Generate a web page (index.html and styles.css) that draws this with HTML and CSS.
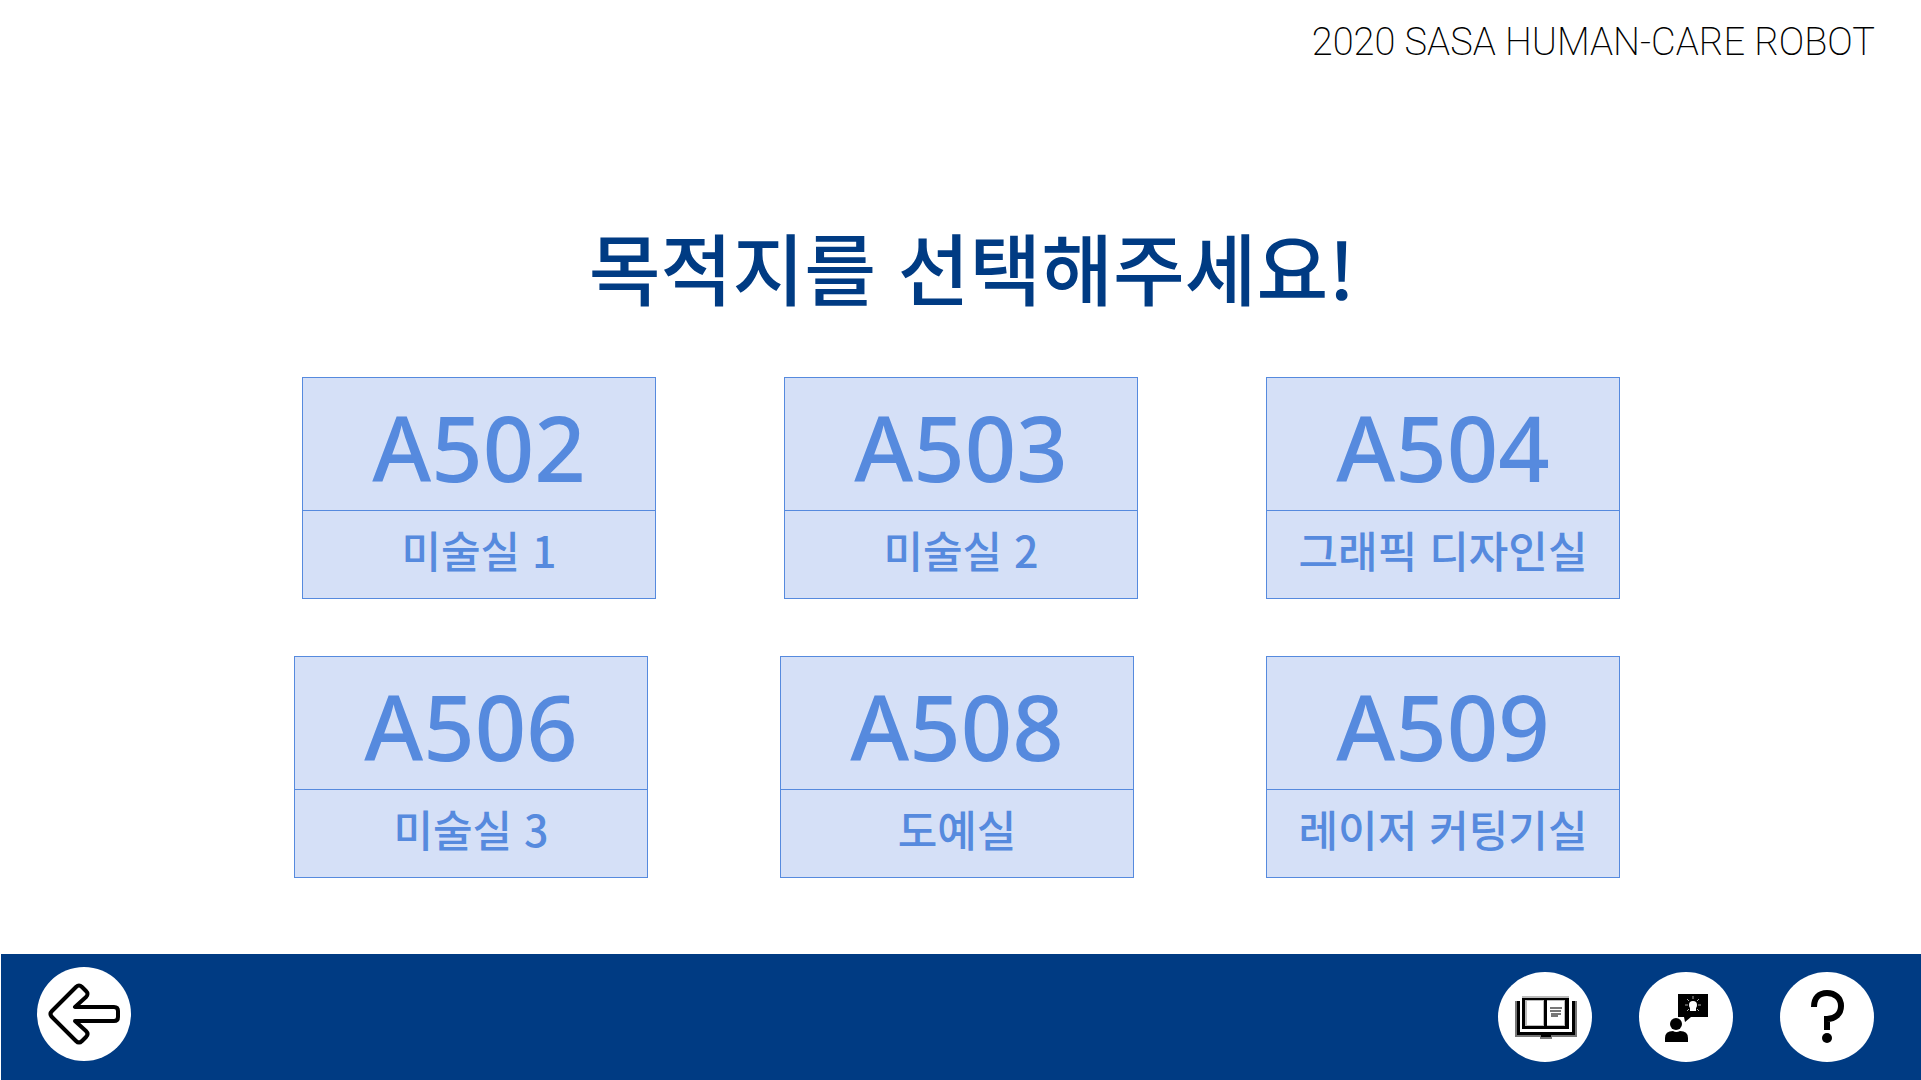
FILE: index.html
```html
<!DOCTYPE html>
<html lang="ko">
<head>
<meta charset="utf-8">
<meta name="viewport" content="width=device-width, initial-scale=1">
<title>목적지 선택</title>
<link rel="stylesheet" href="styles.css">
</head>
<body>
<header class="brand">2020 SASA HUMAN-CARE ROBOT</header>
<main class="content">
  <h1 class="title">목적지를 선택해주세요!</h1>
  <div class="rooms rooms-first">
    <button class="room" type="button"><span class="number">A502</span><span class="name">미술실 1</span></button>
    <button class="room" type="button"><span class="number">A503</span><span class="name">미술실 2</span></button>
    <button class="room" type="button"><span class="number">A504</span><span class="name">그래픽 디자인실</span></button>
  </div>
  <div class="rooms">
    <button class="room" type="button"><span class="number">A506</span><span class="name">미술실 3</span></button>
    <button class="room" type="button"><span class="number">A508</span><span class="name">도예실</span></button>
    <button class="room" type="button"><span class="number">A509</span><span class="name">레이저 커팅기실</span></button>
  </div>
</main>
<footer class="toolbar">
  <button class="tool back" type="button" aria-label="뒤로">
    <svg width="94" height="94" viewBox="0 0 94 94" fill="none" stroke="#000" stroke-width="4" stroke-linejoin="round">
      <path d="M15 44 L39 20 Q42 17 45 20 L49 24 Q52 27 49 30 L38 40 H77 Q81 40 81 44 V50 Q81 54 77 54 H38 L49 64 Q52 67 49 70 L45 74 Q42 77 39 74 L15 50 Q12 47 15 44 Z"/>
    </svg>
  </button>
  <nav class="tools">
    <button class="tool" type="button" aria-label="책">
      <svg width="94" height="90" viewBox="0 0 94 90">
        <path fill="#777" d="M17 29h5v31h52V29h5v36H54v2H42v-2H17z"/>
        <path fill="#000" d="M19 29h3v31h52V29h3v34H53v2H43v-2H19z"/>
        <path fill="#fff" d="M22 29h52v31H22z"/>
        <path fill="#bbb" d="M24 24h47v3H24z"/>
        <path fill="#000" d="M24 26h47v31H24z"/>
        <path fill="#bbb" d="M27 28h19v26H27zM49 28h18v26H49z"/>
        <path fill="#fff" d="M29 29h16v24H29zM49 29h17v24H49z"/>
        <path stroke="#777" stroke-width="2" d="M52 36h12M52 39h11M53 42h10M53 44h7"/>
      </svg>
    </button>
    <button class="tool" type="button" aria-label="안내">
      <svg width="94" height="90" viewBox="0 0 94 90">
        <path d="M39 22h30v23H52l-6 5-1-5h-6z"/>
        <circle cx="54" cy="33" r="4" fill="#fff"/>
        <path fill="#fff" d="M51 35h6v4h-6z"/>
        <path stroke="#aaa" d="M54 24v3M46 33h3M59 33h3M48 27l2 2M60 27l-2 2M48 39l2-2M60 39l-2-2"/>
        <circle cx="37" cy="52" r="6"/>
        <path d="M26 70v-4q0-7 8-7 3 2 7 0 8 0 8 7v4z"/>
      </svg>
    </button>
    <button class="tool" type="button" aria-label="도움말">
      <svg width="94" height="90" viewBox="0 0 94 90">
        <path fill="none" stroke="#000" stroke-width="6" d="M34 35c0-9 5-14 13-14s14 5 14 13-6 13-14 13v11"/>
        <circle cx="47" cy="66" r="5"/>
      </svg>
    </button>
  </nav>
</footer>
</body>
</html>
```
FILE: styles.css
```css
* {
  box-sizing: border-box;
}

body {
  margin: 0;
  min-height: 100vh;
  display: flex;
  flex-direction: column;
  background: #fff;
  font-family: "Noto Sans", "Noto Sans CJK KR", sans-serif;
}

button {
  margin: 0;
  padding: 0;
  border: 0;
  font: inherit;
  cursor: pointer;
}

.brand {
  padding: 16px 46px 0;
  font-family: Roboto, sans-serif;
  font-size: 38px;
  font-weight: 200;
  line-height: 52px;
  text-align: right;
  color: #000;
}

.content {
  flex: 1;
  display: flex;
  flex-direction: column;
  gap: 53px;
  padding: 140px 301px 0 294px;
}

.title {
  margin: 0;
  padding-left: 30px;
  font-family: "Noto Sans CJK KR", sans-serif;
  font-size: 78px;
  font-weight: 500;
  line-height: 116px;
  text-align: center;
  color: #003b83;
}

.rooms {
  display: flex;
  justify-content: space-between;
}

.rooms-first {
  padding-left: 8px;
  margin-bottom: 4px;
}

.room {
  flex: 0 1 354px;
  display: flex;
  flex-direction: column;
  border: 1px solid #568ade;
  background: #d5e0f7;
  color: #568ade;
  font-weight: 500;
  text-align: center;
}

.number {
  width: 100%;
  padding: 8px 0 2px;
  border-bottom: 1px solid #568ade;
  font-size: 90px;
  line-height: 122px;
}

.name {
  width: 100%;
  font-family: "Noto Sans CJK KR", sans-serif;
  font-size: 43px;
  line-height: 76px;
  padding-bottom: 11px;
}

.toolbar {
  display: flex;
  align-items: center;
  justify-content: space-between;
  height: 126px;
  margin-left: 1px;
  padding: 0 47px 0 36px;
  background: #003b83;
}

.tools {
  display: flex;
  gap: 47px;
}

.tool {
  width: 94px;
  height: 90px;
  border-radius: 50%;
  background: #fff;
}

.back {
  height: 94px;
  margin-bottom: 6px;
}

.tool svg {
  display: block;
}
```
